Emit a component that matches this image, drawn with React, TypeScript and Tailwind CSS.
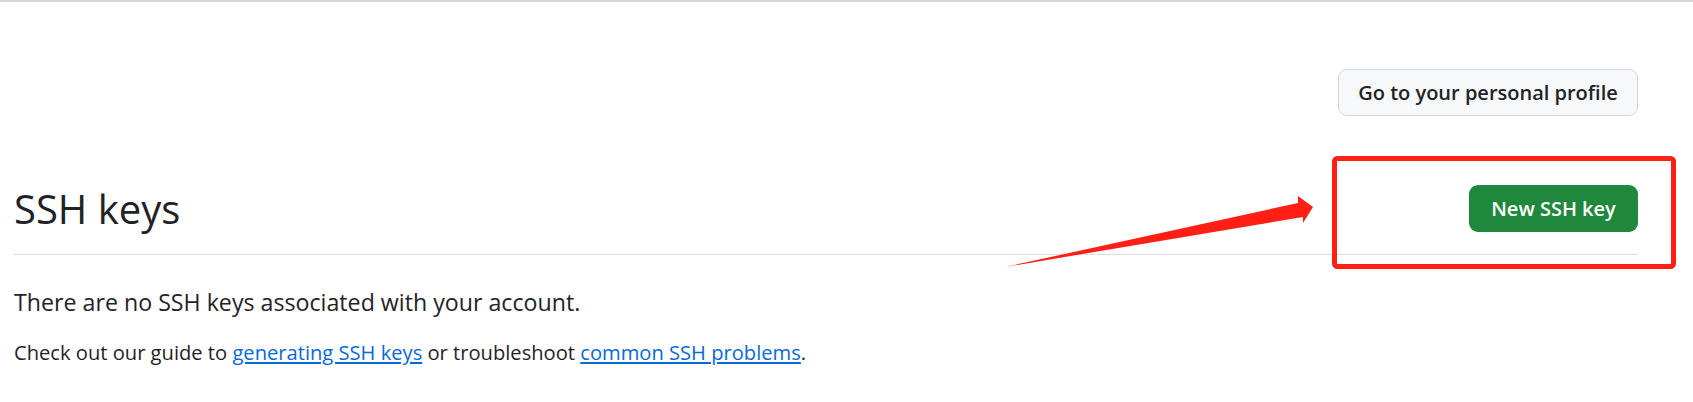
const font = { fontFamily: '"Open Sans", "Noto Sans", sans-serif' }

const Annotation = () => (
  <svg
    className="pointer-events-none absolute left-0 top-0"
    width={1693}
    height={402}
    viewBox="0 0 1693 402"
  >
    <rect x={1334.5} y={158.5} width={339} height={108} rx={3} fill="none" stroke="#ff1f14" strokeWidth={5} />
    <polygon
      points="1005,267 1298,203 1298,196 1313,207 1303,223 1303,217"
      fill="#ff1f14"
    />
  </svg>
)

export default function App() {
  return (
    <div className="relative h-[402px] w-full overflow-hidden bg-white text-[#1f2328]" style={font}>
      <div className="h-[2px] w-full bg-[#d0d7de]" />

      <div className="pl-[14px] pr-[55px]">
        <div className="flex justify-end pt-[67px]">
          <button className="h-[47px] w-[300px] rounded-[9px] border border-[#d0d7de] bg-[#f6f8fa] text-[20px] font-semibold text-[#1f2328]">
            Go to your personal profile
          </button>
        </div>

        <div className="mt-[69px] flex items-center justify-between border-b border-[#d8dee4] pb-[22px]">
          <h2 className="text-[40px] font-normal leading-[47px]">SSH keys</h2>
          <button className="h-[47px] w-[169px] rounded-[9px] bg-[#1f883d] text-[20px] font-semibold text-white">
            New SSH key
          </button>
        </div>

        <p className="mt-[33px] text-[23.2px] leading-[28px]">There are no SSH keys associated with your account.</p>
        <p className="mt-[23px] text-[20.15px] leading-[26px]">
          Check out our guide to{' '}
          <a href="#" className="text-[#0969da] underline">generating SSH keys</a> or troubleshoot{' '}
          <a href="#" className="text-[#0969da] underline">common SSH problems</a>.
        </p>
      </div>

      <Annotation />
    </div>
  )
}
